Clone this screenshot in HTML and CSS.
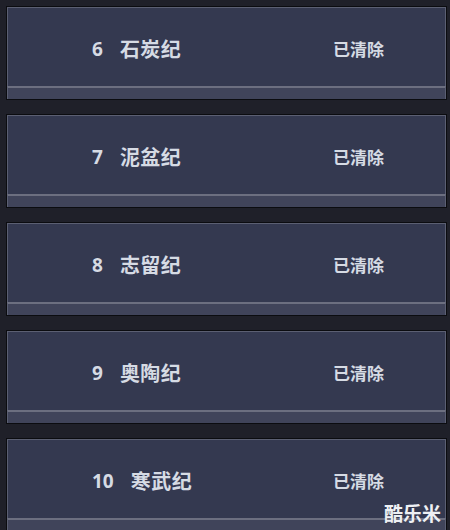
FILE: index.html
```html
<!DOCTYPE html>
<html lang="zh-CN">
<head>
  <meta charset="UTF-8">
  <meta name="viewport" content="width=device-width, initial-scale=1.0">
  <title>地质纪元</title>
  <link rel="stylesheet" href="styles.css">
</head>
<body>
  <div class="list">
    <div class="card">
      <div class="card-main">
        <span class="num">6</span>
        <span class="name">石炭纪</span>
        <span class="status">已清除</span>
      </div>
      <div class="card-foot"></div>
    </div>
    <div class="card">
      <div class="card-main">
        <span class="num">7</span>
        <span class="name">泥盆纪</span>
        <span class="status">已清除</span>
      </div>
      <div class="card-foot"></div>
    </div>
    <div class="card">
      <div class="card-main">
        <span class="num">8</span>
        <span class="name">志留纪</span>
        <span class="status">已清除</span>
      </div>
      <div class="card-foot"></div>
    </div>
    <div class="card">
      <div class="card-main">
        <span class="num">9</span>
        <span class="name">奥陶纪</span>
        <span class="status">已清除</span>
      </div>
      <div class="card-foot"></div>
    </div>
    <div class="card">
      <div class="card-main">
        <span class="num">10</span>
        <span class="name">寒武纪</span>
        <span class="status">已清除</span>
      </div>
      <div class="card-foot"></div>
    </div>
  </div>

  <div class="watermark">酷乐米</div>
</body>
</html>
```

FILE: styles.css
```css
/* Basic Reset */
* { margin: 0; padding: 0; box-sizing: border-box; }
body {
  font-family: "Noto Sans CJK SC", "Noto Sans", sans-serif;
  background: #1f2029;
  color: #d6dbe4;
  width: 450px;
  height: 530px;
  overflow: hidden;
  position: relative;
}
.list {
  display: flex;
  flex-direction: column;
  gap: 14px;
  padding: 6px 3px 0 6px;
}
.card {
  border: 1px solid #0b0c10;
  background: #0b0c10;
  height: 94px;
  flex-shrink: 0;
  display: flex;
  flex-direction: column;
}
.card-main {
  flex: 1;
  display: flex;
  align-items: center;
  padding: 3px 61px 0 84px;
  background: #343950;
  border: 1px solid #5b5f72;
  border-bottom: none;
}
.num {
  font-family: "Noto Sans", sans-serif;
  font-weight: 700;
  font-size: 19px;
  margin-right: 17px;
}
.name {
  font-weight: 700;
  font-size: 20px;
  letter-spacing: 0.5px;
}
.status {
  margin-left: auto;
  font-weight: 700;
  font-size: 17px;
}
.card-foot {
  height: 13px;
  background: #40445a;
  border-top: 2px solid #6c6f80;
  border-left: 1px solid #5b5f72;
  border-right: 1px solid #5b5f72;
}
.watermark {
  position: absolute;
  right: 9px;
  bottom: 4px;
  font-weight: 700;
  font-size: 19px;
  color: #eef0f4;
}
```
